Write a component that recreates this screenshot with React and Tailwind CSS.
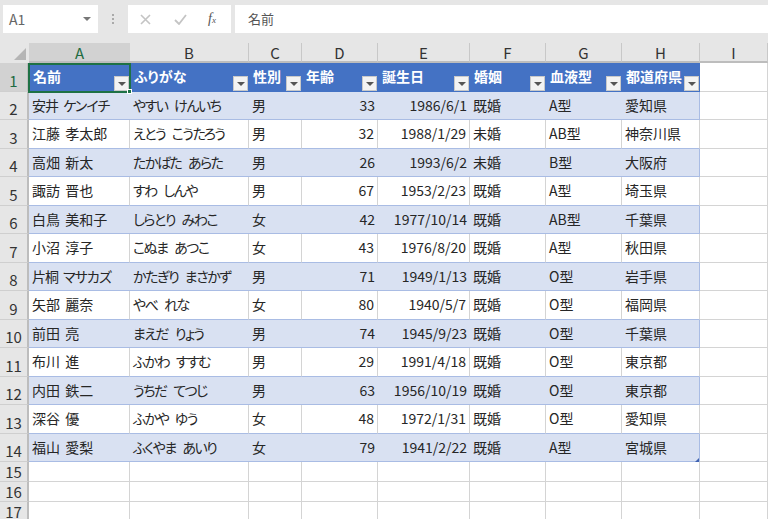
import React from 'react';

const font = { fontFamily: '"Noto Sans CJK JP", sans-serif' };

const columns = ['A', 'B', 'C', 'D', 'E', 'F', 'G', 'H', 'I'];
const headers = ['名前', 'ふりがな', '性別', '年齢', '誕生日', '婚姻', '血液型', '都道府県'];

const rows = [
  ['安井 ケンイチ', 'やすい けんいち', '男', 33, '1986/6/1', '既婚', 'A型', '愛知県'],
  ['江藤 孝太郎', 'えとう こうたろう', '男', 32, '1988/1/29', '未婚', 'AB型', '神奈川県'],
  ['高畑 新太', 'たかばた あらた', '男', 26, '1993/6/2', '未婚', 'B型', '大阪府'],
  ['諏訪 晋也', 'すわ しんや', '男', 67, '1953/2/23', '既婚', 'A型', '埼玉県'],
  ['白鳥 美和子', 'しらとり みわこ', '女', 42, '1977/10/14', '既婚', 'AB型', '千葉県'],
  ['小沼 淳子', 'こぬま あつこ', '女', 43, '1976/8/20', '既婚', 'A型', '秋田県'],
  ['片桐 マサカズ', 'かたぎり まさかず', '男', 71, '1949/1/13', '既婚', 'O型', '岩手県'],
  ['矢部 麗奈', 'やべ れな', '女', 80, '1940/5/7', '既婚', 'O型', '福岡県'],
  ['前田 亮', 'まえだ りょう', '男', 74, '1945/9/23', '既婚', 'O型', '千葉県'],
  ['布川 進', 'ふかわ すすむ', '男', 29, '1991/4/18', '既婚', 'O型', '東京都'],
  ['内田 鉄二', 'うちだ てつじ', '男', 63, '1956/10/19', '既婚', 'O型', '東京都'],
  ['深谷 優', 'ふかや ゆう', '女', 48, '1972/1/31', '既婚', 'O型', '愛知県'],
  ['福山 愛梨', 'ふくやま あいり', '女', 79, '1941/2/22', '既婚', 'A型', '宮城県'],
];

// kana runs a bit narrower than the font we have, so squeeze those cells
function cellSpacing(val, c) {
  if (c === 1) return 'tracking-[-1.5px] [word-spacing:5px]';
  if (c === 0) return /[ァ-ヶ]/.test(val) ? 'tracking-[-1px] [word-spacing:3px]' : '[word-spacing:2px]';
  return '';
}

function FilterButton() {
  return (
    <span className="absolute right-[1px] bottom-[1px] flex h-[15px] w-[15px] items-center justify-center border border-[#c9c9c9] bg-[#f3f3f3]">
      <span className="mt-[2px] h-0 w-0 border-x-[4px] border-t-[4px] border-x-transparent border-t-[#555555]" />
    </span>
  );
}

function RowHeader({ label, active, tall }) {
  return (
    <div
      className={`flex justify-center border-r-2 border-b border-r-[#bdbdbd] border-b-[#cfcfcf] text-[15px] leading-none ${tall ? 'items-end pb-[3px]' : 'items-center'} ${active ? 'bg-[#d2d2d2] text-[#1e6b41]' : 'bg-[#e6e6e6] text-[#333333]'}`}
    >
      {label}
    </div>
  );
}

function App() {
  return (
    <div className="h-[519px] w-[768px] overflow-hidden bg-white [font-feature-settings:'palt']" style={font}>
      {/* formula bar */}
      <div className="flex h-[43px] items-start bg-[#e6e6e6] pt-[5px] pb-[10px]">
        <div className="ml-[3px] flex h-[28px] w-[95px] items-center justify-between bg-white pr-[7px] pl-[6px] text-[14px] text-[#666666]">
          <span>A1</span>
          <span className="h-0 w-0 border-x-[4px] border-t-[4px] border-x-transparent border-t-[#777777]" />
        </div>
        <div className="flex h-[28px] w-[30px] flex-col items-center justify-center gap-[2px]">
          <span className="h-[2px] w-[2px] bg-[#aaaaaa]" />
          <span className="h-[2px] w-[2px] bg-[#aaaaaa]" />
          <span className="h-[2px] w-[2px] bg-[#aaaaaa]" />
        </div>
        <div className="flex h-[28px] w-[103px] items-center bg-white pl-[12px]">
          <svg width="11" height="11" viewBox="0 0 11 11" fill="none" stroke="#c4c4c4" strokeWidth="1.6">
            <path d="M1 1 L10 10 M10 1 L1 10" />
          </svg>
          <svg className="ml-[23px]" width="13" height="11" viewBox="0 0 13 11" fill="none" stroke="#c4c4c4" strokeWidth="1.8">
            <path d="M1 6 L5 10 L12 1" />
          </svg>
          <span className="ml-[21px] flex items-baseline text-[14px] leading-none text-[#555555] italic" style={{ fontFamily: '"Liberation Serif", serif' }}>
            f<span className="text-[9px] leading-none">x</span>
          </span>
        </div>
        <div className="ml-[4px] flex h-[28px] flex-1 items-center bg-white pl-[13px] text-[13px] text-[#555555]">名前</div>
      </div>

      {/* sheet */}
      <div className="relative grid grid-cols-[29px_101px_119px_53px_76px_92px_76px_76px_78px_68px] grid-rows-[20px_repeat(14,28.5px)_20px_20px_20px] text-[14px] text-[#262626]">
        <div className="relative bg-[#e6e6e6]">
          <span className="absolute right-[3px] bottom-[3px] h-0 w-0 border-b-[12px] border-l-[12px] border-b-[#b5b5b5] border-l-transparent" />
        </div>
        {columns.map((col, i) => (
          <div
            key={col}
            className={`flex items-center justify-center border-b-2 border-b-[#bdbdbd] text-[15px] leading-none ${i === 0 ? 'bg-[#d2d2d2] text-[#1e6b41]' : 'border-r border-r-[#c8c8c8] bg-[#e6e6e6] text-[#333333]'}`}
          >
            {col}
          </div>
        ))}

        <RowHeader label="1" active tall />
        {headers.map((h) => (
          <div key={h} className="relative flex items-start bg-[#4472c4] pt-[3px] pl-[4px] font-bold whitespace-nowrap text-white">
            {h}
            <FilterButton />
          </div>
        ))}
        <div className="border-r border-b border-r-[#d4d4d4] border-b-[#d4d4d4]" />

        {rows.map((row, r) => {
          const striped = r % 2 === 0;
          return (
            <React.Fragment key={row[0]}>
              <RowHeader label={r + 2} tall />
              {row.map((val, c) => {
                const right = c === 3 || c === 4;
                return (
                  <div
                    key={c}
                    className={`flex items-center border-b border-b-[#a9bce4] whitespace-pre ${cellSpacing(val, c)} ${striped ? 'bg-[#d9e1f2]' : 'border-r border-r-[#d4d4d4] bg-white'} ${c === 7 ? 'border-r border-r-[#a9bce4]' : ''} ${right ? 'justify-end pr-[3px]' : 'pl-[3px]'}`}
                  >
                    {val}
                  </div>
                );
              })}
              <div className="border-r border-b border-r-[#d4d4d4] border-b-[#d4d4d4]" />
            </React.Fragment>
          );
        })}

        {[15, 16, 17].map((n) => (
          <React.Fragment key={n}>
            <RowHeader label={n} />
            {columns.map((col) => (
              <div key={col} className="border-r border-b border-r-[#d4d4d4] border-b-[#d4d4d4]" />
            ))}
          </React.Fragment>
        ))}

        {/* selected cell A1 */}
        <div className="pointer-events-none absolute top-[20px] left-[28px] h-[30px] w-[103px] border-2 border-[#1e7145]">
          <span className="absolute -right-[3px] -bottom-[3px] h-[5px] w-[5px] border border-white bg-[#1e7145]" />
        </div>
        {/* table resize handle */}
        <span className="absolute top-[415px] left-[695px] h-0 w-0 border-b-[4px] border-l-[4px] border-b-[#3f62b0] border-l-transparent" />
      </div>
    </div>
  );
}

export default App;
